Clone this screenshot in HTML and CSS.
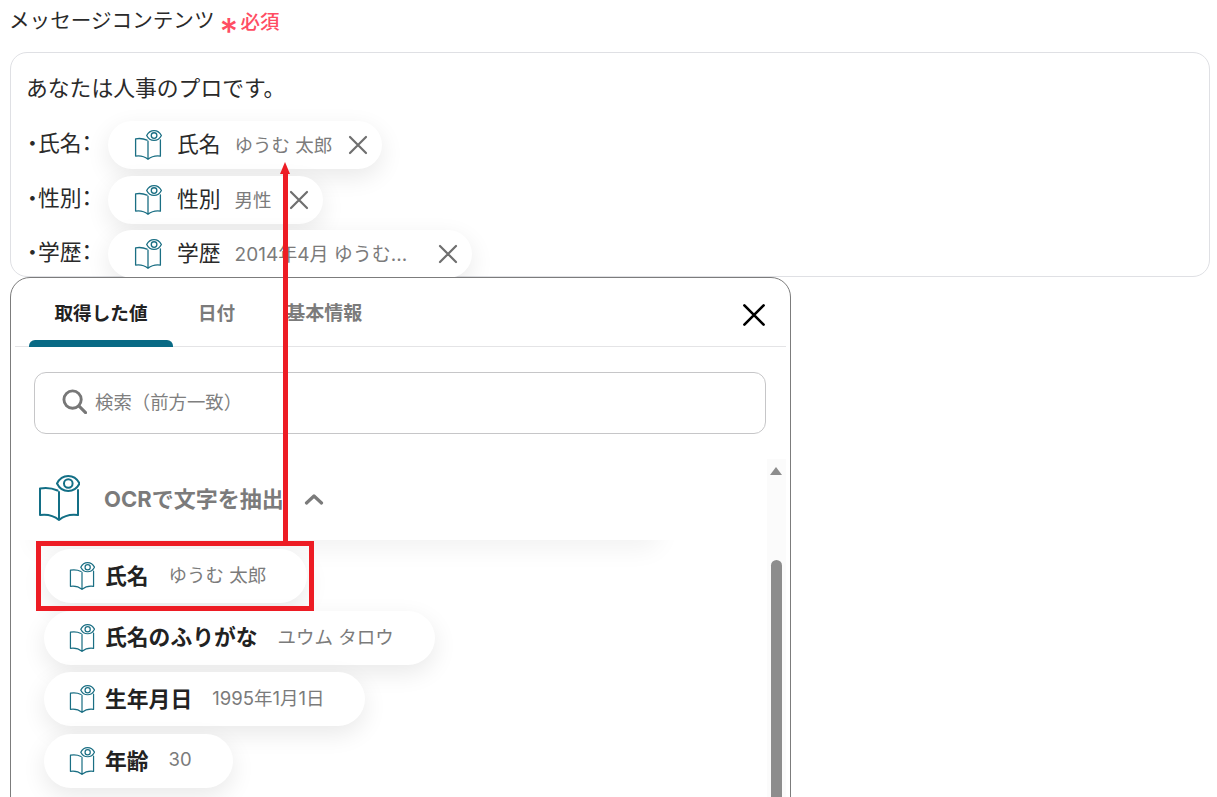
FILE: index.html
```html
<!DOCTYPE html>
<html lang="ja">
<head>
<meta charset="utf-8">
<title>メッセージコンテンツ</title>
<link rel="stylesheet" href="styles.css">
</head>
<body>
<svg class="defs" aria-hidden="true">
  <symbol id="book" viewBox="0 0 42 46">
    <path d="M19.500 15.500C14 13 8 12.500 2 13.500V40C9 39 15 40 21 45C27 40 33 39 40 40V15M21 17V45" fill="none" stroke="currentColor" stroke-width="2" stroke-linejoin="round" stroke-linecap="round"/>
    <path d="M19 8.500C24 -1.500 36.500 -1.500 41.500 8.500C36.500 18.500 24 18.500 19 8.500Z" fill="#fff" stroke="currentColor" stroke-width="2" stroke-linejoin="round"/>
    <circle cx="30.300" cy="8.500" r="4.300" fill="none" stroke="currentColor" stroke-width="2"/>
  </symbol>
  <symbol id="cross" viewBox="0 0 20 20">
    <path d="M2 2L18 18M18 2L2 18" fill="none" stroke="currentColor" stroke-width="2.200" stroke-linecap="round"/>
  </symbol>
</svg>

<main class="page">
  <div class="field-label">
    <span class="field-name">メッセージコンテンツ</span>
    <span class="required"><span class="asterisk">*</span><span class="required-text">必須</span></span>
  </div>

  <section class="editor">
    <p class="intro">あなたは人事のプロです。</p>
    <div class="row">
      <span class="row-label">・氏名：</span>
      <span class="token token-name">
        <svg class="token-icon"><use href="#book"/></svg>
        <span class="token-title">氏名</span>
        <span class="token-value">ゆうむ 太郎</span>
        <svg class="token-close"><use href="#cross"/></svg>
      </span>
    </div>
    <div class="row">
      <span class="row-label">・性別：</span>
      <span class="token token-tight">
        <svg class="token-icon"><use href="#book"/></svg>
        <span class="token-title">性別</span>
        <span class="token-value">男性</span>
        <svg class="token-close"><use href="#cross"/></svg>
      </span>
    </div>
    <div class="row">
      <span class="row-label">・学歴：</span>
      <span class="token token-wide">
        <svg class="token-icon"><use href="#book"/></svg>
        <span class="token-title">学歴</span>
        <span class="token-value token-value-long">2014年4月 ゆうむ...</span>
        <svg class="token-close"><use href="#cross"/></svg>
      </span>
    </div>
  </section>

  <section class="picker">
    <header class="tabs">
      <span class="tab tab-active">取得した値</span>
      <span class="tab tab-date">日付</span>
      <span class="tab tab-basic">基本情報</span>
      <svg class="picker-close"><use href="#cross"/></svg>
    </header>

    <div class="search">
      <svg class="search-icon" viewBox="0 0 26 26"><circle cx="11" cy="11" r="9" fill="none" stroke="currentColor" stroke-width="3"/><path d="M17.500 17.500L24.500 24.500" fill="none" stroke="currentColor" stroke-width="3.200" stroke-linecap="round"/></svg>
      <span class="search-text">検索（前方一致）</span>
    </div>

    <div class="results">
      <div class="list">
        <div class="group">
          <svg class="group-icon"><use href="#book"/></svg>
          <span class="group-title">OCRで文字を抽出</span>
          <svg class="chevron" viewBox="0 0 20 12"><path d="M2.500 10L10 3L17.500 10" fill="none" stroke="currentColor" stroke-width="3.200" stroke-linecap="round" stroke-linejoin="round"/></svg>
        </div>
        <div class="items">
          <div class="item item-name"><svg class="item-icon"><use href="#book"/></svg><span class="item-title">氏名</span><span class="item-value">ゆうむ 太郎</span></div>
          <div class="item"><svg class="item-icon"><use href="#book"/></svg><span class="item-title">氏名のふりがな</span><span class="item-value">ユウム タロウ</span></div>
          <div class="item"><svg class="item-icon"><use href="#book"/></svg><span class="item-title">生年月日</span><span class="item-value">1995年1月1日</span></div>
          <div class="item"><svg class="item-icon"><use href="#book"/></svg><span class="item-title">年齢</span><span class="item-value">30</span></div>
        </div>
      </div>
      <div class="scrollbar">
        <span class="scroll-up"></span>
        <span class="scroll-thumb"></span>
      </div>
    </div>
  </section>
</main>

<div class="callout-line"></div>
<div class="callout-head"></div>
<div class="callout-box"></div>
</body>
</html>
```

FILE: styles.css
```css
* { box-sizing: border-box; }

html, body {
  margin: 0;
  height: 100%;
  overflow: hidden;
  background: #fff;
}

body {
  font-family: Inter, "Noto Sans CJK JP", sans-serif;
  color: #2a2a2a;
}

.defs { display: none; }

.page {
  display: flex;
  flex-direction: column;
  padding: 0 7px 0 10px;
  height: 797px;
  overflow: hidden;
}

.field-label {
  flex: none;
  display: flex;
  align-items: center;
  height: 52px;
  padding-bottom: 9px;
}

.field-name {
  margin-left: -1px;
  font-size: 20.600px;
  line-height: 1.2;
}

.required {
  display: flex;
  align-items: center;
  height: 28px;
  margin: -1px 0 0 5px;
  font-size: 19.500px;
  font-weight: 500;
  color: #ff4d63;
}

.asterisk {
  display: block;
  width: 21px;
  height: 18px;
  font-size: 36px;
  line-height: 36px;
  font-weight: 500;
  margin-top: 2px;
}

.required-text { padding-bottom: 1px; }

.editor {
  flex: none;
  height: 225px;
  border: 1px solid #dfe0e4;
  border-radius: 17px;
  padding: 16px;
  background: #fff;
}

.intro {
  margin: 0 0 14px -1px;
  font-size: 21.800px;
  line-height: 38px;
}

.row {
  display: flex;
  align-items: center;
  height: 48px;
  margin-bottom: 7px;
}

.row:last-child { margin-top: -1px; }

.row-label {
  width: 81px;
  flex: none;
  font-size: 21.800px;
  font-feature-settings: "palt";
  position: relative;
  top: -4px;
}

.token {
  display: inline-flex;
  align-items: center;
  height: 48px;
  padding: 0 14px 0 26px;
  border-radius: 24px;
  background: #fff;
  box-shadow: 0 8px 24px rgba(0, 0, 0, 0.09);
}

.token-name { width: 274px; }
.token-tight { width: 215px; }
.token-wide { width: 364px; }

.token-icon {
  width: 28px;
  height: 30px;
  color: #1b6f84;
  flex: none;
}

.token-title {
  margin-left: 15px;
  padding-bottom: 5px;
  font-size: 21.800px;
  flex: none;
}

.token-value {
  margin-left: 14px;
  padding-bottom: 3px;
  font-size: 18.500px;
  color: #7b7b7b;
  white-space: pre;
  flex: none;
}

.token-value-long { font-size: 19px; }

.token-close {
  width: 20px;
  height: 20px;
  margin-left: auto;
  margin-top: -1px;
  color: #6f6f6f;
  flex: none;
}

.picker {
  position: relative;
  flex: none;
  width: 781px;
  height: 560px;
  padding: 0 4px;
  border: 1px solid #7c7c7c;
  border-radius: 20px;
  background: #fff;
  overflow: hidden;
}

.tabs {
  display: flex;
  align-items: center;
  height: 69px;
  padding-left: 14px;
  border-bottom: 1px solid #e4e4e6;
  position: relative;
}

.tab {
  font-size: 18.600px;
  font-weight: 700;
  color: #7b7b7b;
  padding-bottom: 1px;
}

.tab-active {
  position: relative;
  width: 144px;
  height: 69px;
  padding-bottom: 3px;
  line-height: 70px;
  text-align: center;
  color: #222;
}

.tab-active::after {
  content: "";
  position: absolute;
  left: 0;
  right: 0;
  bottom: 0;
  height: 7px;
  background: #096a85;
  border-radius: 6px 6px 0 0;
}

.tab-date { margin-left: 25px; }
.tab-basic { margin-left: 51px; font-size: 19px; }

.picker-close {
  width: 24px;
  height: 24px;
  margin-left: auto;
  margin-right: 20px;
  margin-top: 5px;
  color: #000;
}

.search {
  display: flex;
  align-items: center;
  height: 62px;
  margin: 25px 20px 0 19px;
  padding-left: 27px;
  border: 1px solid #c6c6c8;
  border-radius: 12px;
}

.search-icon {
  width: 25px;
  height: 25px;
  margin-bottom: 3px;
  color: #777;
  flex: none;
}

.search-text {
  margin-left: 8px;
  padding-bottom: 4px;
  font-size: 18.400px;
  color: #7f7f7f;
}

.results {
  display: flex;
  margin-top: 25px;
  height: 345px;
  isolation: isolate;
}

.list { flex: 1; min-width: 0; overflow: hidden; }

.group {
  display: flex;
  align-items: center;
  height: 81px;
  padding-left: 23px;
  background: #fff;
  position: relative;
}

.group::after {
  content: "";
  position: absolute;
  z-index: -1;
  left: 20px;
  bottom: 0;
  width: 625px;
  height: 40px;
  background: #fff;
  box-shadow: 0 10px 24px rgba(0, 0, 0, 0.05);
  border-radius: 0 0 16px 0;
}

.group-icon {
  width: 42px;
  height: 46px;
  margin-bottom: 4px;
  color: #136f86;
  flex: none;
}

.group-title {
  margin-left: 24px;
  padding-bottom: 5px;
  font-size: 22px;
  font-weight: 700;
  color: #7b7b7b;
}

.chevron {
  width: 20px;
  height: 12px;
  margin-left: 20px;
  margin-top: -2px;
  color: #7b7b7b;
}

.items {
  display: flex;
  flex-direction: column;
  align-items: flex-start;
  gap: 7.700px;
  padding: 9px 0 0 29px;
}

.item {
  display: flex;
  align-items: center;
  height: 54px;
  padding: 0 41px 0 25px;
  border-radius: 27px;
  background: #fff;
  box-shadow: 0 8px 24px rgba(0, 0, 0, 0.09);
  flex: none;
}

.item-icon {
  width: 26px;
  height: 28px;
  color: #1b6f84;
  flex: none;
}

.item-title {
  margin-left: 10px;
  padding-bottom: 4px;
  font-size: 21.800px;
  font-weight: 700;
  color: #222;
}

.item-value {
  margin-left: 20px;
  padding-bottom: 4px;
  font-size: 18.500px;
  color: #7b7b7b;
  white-space: pre;
}

.scrollbar {
  position: relative;
  flex: none;
  width: 19px;
  background: #fbfbfb;
}

.scroll-up {
  position: absolute;
  left: 3px;
  top: 8px;
  width: 0;
  height: 0;
  border-left: 6.500px solid transparent;
  border-right: 6.500px solid transparent;
  border-bottom: 8px solid #8d8d8d;
}

.scroll-thumb {
  position: absolute;
  left: 4px;
  top: 101px;
  width: 11px;
  height: 260px;
  border-radius: 5.500px;
  background: #8d8d8d;
}

.callout-line {
  position: absolute;
  left: 283px;
  top: 172px;
  width: 4.500px;
  height: 372px;
  background: #ed1c24;
}

.callout-head {
  position: absolute;
  left: 279.500px;
  top: 162px;
  width: 0;
  height: 0;
  border-left: 5.500px solid transparent;
  border-right: 5.500px solid transparent;
  border-bottom: 12px solid #ed1c24;
}

.callout-box {
  position: absolute;
  left: 36px;
  top: 541px;
  width: 278px;
  height: 70px;
  border: 5px solid #ed1c24;
}
```
